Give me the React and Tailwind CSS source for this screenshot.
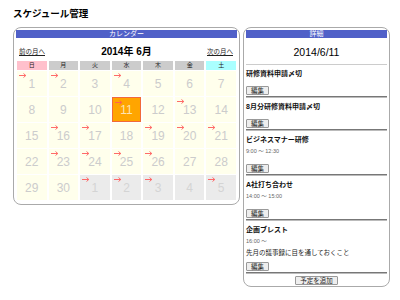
import React from 'react';

const JP = { fontFamily: '"Liberation Sans", "Noto Sans CJK JP", sans-serif' };

const WEEK = [
  { label: '日', cls: 'bg-[#ffc0cc]' },
  { label: '月', cls: 'bg-[#cccccc]' },
  { label: '火', cls: 'bg-[#cccccc]' },
  { label: '水', cls: 'bg-[#cccccc]' },
  { label: '木', cls: 'bg-[#cccccc]' },
  { label: '金', cls: 'bg-[#cccccc]' },
  { label: '土', cls: 'bg-[#aaffff]' },
];

const MARKED = [1, 2, 4, 11, 13, 16, 17, 19, 20, 21, 23, 24, 25, 26];
const NEXT_MARKED = [1, 2, 3, 5];

const DAYS = [
  ...Array.from({ length: 30 }, (_, i) => ({
    n: i + 1,
    other: false,
    mark: MARKED.includes(i + 1),
  })),
  ...Array.from({ length: 5 }, (_, i) => ({
    n: i + 1,
    other: true,
    mark: NEXT_MARKED.includes(i + 1),
  })),
];

const EVENTS = [
  { title: '研修資料申請〆切' },
  { title: '8月分研修資料申請〆切' },
  { title: 'ビジネスマナー研修', time: '9:00 〜 12:30' },
  { title: 'A社打ち合わせ', time: '14:00 〜 15:00' },
  { title: '企画ブレスト', time: '16:00 〜', memo: '先月の議事録に目を通しておくこと' },
];

function Arrow() {
  return (
    <svg
      width="8"
      height="6"
      viewBox="0 0 8 6"
      className="absolute left-[2px] top-[2px]"
      fill="none"
      stroke="#ff5a5a"
      strokeWidth="0.9"
    >
      <path d="M0 2.5H6.5" />
      <path d="M4.5 0.5L6.8 2.5L4.5 4.5" />
    </svg>
  );
}

function Button({ children }) {
  return (
    <button className="flex h-[9px] items-center rounded-[1px] border border-[#999] bg-[#eeeeee] px-[4px] text-[6.5px] leading-[7px] text-[#222]">
      {children}
    </button>
  );
}

function Calendar() {
  return (
    <div className="h-[178px] w-[227px] rounded-[8px] border border-[#aaaaaa] p-[2px]">
      <div className="h-[8px] bg-[#5060c8] text-center text-[7px] leading-[8px] text-white">
        カレンダー
      </div>

      {/* month nav */}
      <div className="mt-[6px] grid h-[14px] grid-cols-3 items-center px-[3px]">
        <span className="text-[6.5px] text-[#222] underline">前の月へ</span>
        <span className="text-center text-[10px] font-bold text-black">2014年 6月</span>
        <span className="pr-[1px] text-right text-[6.5px] text-[#222] underline">次の月へ</span>
      </div>

      {/* grid */}
      <div className="mt-[3px] grid grid-cols-7 gap-x-[2px] gap-y-[1px] px-[1px]">
        {WEEK.map((w) => (
          <div
            key={w.label}
            className={`h-[9px] text-center text-[6px] leading-[9px] text-[#222] ${w.cls}`}
          >
            {w.label}
          </div>
        ))}
        {DAYS.map((d, i) => {
          const today = !d.other && d.n === 11;
          const bg = today
            ? 'border border-[#f06a3a] bg-[#ffa500] text-[#fde4b4]'
            : d.other
              ? 'bg-[#ebebeb] text-[#d4d4d4]'
              : 'bg-[#ffffec] text-[#cccccc]';
          return (
            <div
              key={i}
              className={`relative flex h-[25px] items-center justify-center text-[12px] ${bg}`}
            >
              {d.mark && <Arrow />}
              {d.n}
            </div>
          );
        })}
      </div>
    </div>
  );
}

function Detail() {
  return (
    <div className="w-[147px] rounded-[8px] border border-[#aaaaaa] px-[2px] pb-[1px] pt-[2px]">
      <div className="h-[8px] bg-[#5060c8] text-center text-[7px] leading-[8px] text-white">
        詳細
      </div>
      <div className="mt-[7px] text-center text-[10.5px] leading-[14px] text-black">2014/6/11</div>
      <div className="mt-[5px] h-px bg-[#cccccc]" />

      {EVENTS.map((e, i) => (
        <div key={i}>
          <div className="mt-[5px] text-[7px] font-bold leading-[8px] text-[#111]">{e.title}</div>
          {e.time && (
            <div className="mt-[3px] text-[5.5px] leading-[8px] text-[#666]">{e.time}</div>
          )}
          {e.memo && (
            <div className="mt-[4px] text-[6.5px] leading-[8px] text-[#222]">{e.memo}</div>
          )}
          <div className={`flex ${e.memo ? 'mt-[5px]' : e.time ? 'mt-[9px]' : 'mt-[8px]'}`}>
            <Button>編集</Button>
          </div>
          <div className="mt-px h-[2px] border-t border-[#777] bg-[#bbb]" />
        </div>
      ))}

      <div className="mt-[2px] flex justify-center">
        <Button>予定を追加</Button>
      </div>
    </div>
  );
}

export default function App() {
  return (
    <div className="h-[300px] w-[400px] overflow-hidden bg-white pl-[13px] pt-[8px]" style={JP}>
      <h1 className="text-[9.5px] font-bold leading-[12px] text-black">スケジュール管理</h1>
      <div className="mt-[7px] flex items-start gap-[3px]">
        <Calendar />
        <Detail />
      </div>
    </div>
  );
}
